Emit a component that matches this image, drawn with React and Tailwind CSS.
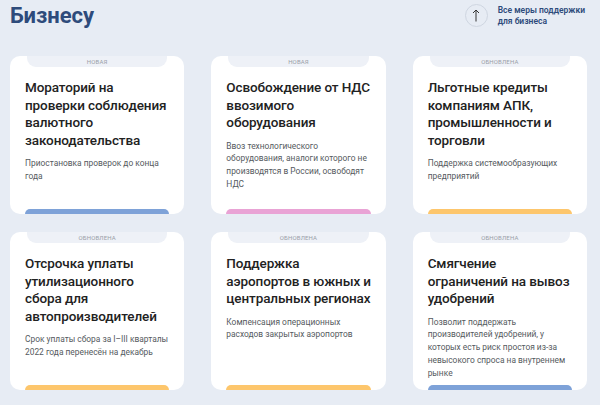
const cards = [
  {
    tag: "Новая",
    title: "Мораторий на проверки соблюдения валютного законодательства",
    text: "Приостановка проверок до конца года",
    bar: "bg-[#7ea2d8]",
  },
  {
    tag: "Новая",
    title: "Освобождение от НДС ввозимого оборудования",
    text: "Ввоз технологического оборудования, аналоги которого не производятся в России, освободят НДС",
    bar: "bg-[#e9a3d5]",
  },
  {
    tag: "Обновлена",
    title: "Льготные кредиты компаниям АПК, промышленности и торговли",
    text: "Поддержка  системообразующих предприятий",
    bar: "bg-[#fdc66c]",
  },
  {
    tag: "Обновлена",
    title: "Отсрочка уплаты утилизационного сбора для автопроизводителей",
    text: "Срок уплаты сбора за I–III кварталы 2022 года перенесён на декабрь",
    bar: "bg-[#fdc66c]",
  },
  {
    tag: "Обновлена",
    title: "Поддержка аэропортов в южных и центральных регионах",
    text: "Компенсация операционных расходов закрытых аэропортов",
    bar: "bg-[#fdc66c]",
  },
  {
    tag: "Обновлена",
    title: "Смягчение ограничений на вывоз удобрений",
    text: "Позволит поддержать производителей удобрений, у которых есть риск простоя из-за невысокого спроса на внутреннем рынке",
    bar: "bg-[#7ea2d8]",
  },
];

const Card = ({ tag, title, text, bar }) => {
  return (
    <div className="bg-white rounded-[10px] h-[158px] flex flex-col">
      <div className="mx-[17px] h-[11px] bg-[#eef1f7] rounded-b-[9px] flex items-center justify-center">
        <span className="text-[6px] uppercase text-[#9aa0a8] tracking-wide leading-none">{tag}</span>
      </div>
      <div className="pl-[15px] pr-[12px] pt-[12px]">
        <h3 className="text-[13.5px] leading-[17.5px] font-medium tracking-[-0.1px] text-[#222]">{title}</h3>
        <p className="mt-[8px] text-[8.4px] leading-[12.8px] text-[#555a60]">{text}</p>
      </div>
      <div className={`mt-auto mx-[15px] h-[5px] rounded-t-[6px] ${bar}`}></div>
    </div>
  );
};

const App = () => {
  return (
    <div className="w-[600px] h-[405px] overflow-hidden bg-[#e7ecf4]" style={{ fontFamily: "Roboto, 'Noto Sans', sans-serif" }}>
      <div className="flex justify-between items-start pl-[10px] pr-[13px] pt-[2px] h-[56px]">
        <h1 className="text-[22px] leading-[28px] font-bold text-[#2e4b7b]">Бизнесу</h1>
        <div className="flex items-start gap-[10px] pt-[1px] pr-[2px]">
          <div className="w-[23px] h-[23px] rounded-full border border-[#cfd6e1] flex items-center justify-center mt-[1px]">
            <svg width="8" height="13" viewBox="0 0 8 13" fill="none" stroke="#333" strokeWidth="1">
              <path d="M4 12.5V1M1 4l3-3 3 3" />
            </svg>
          </div>
          <div className="text-[8.5px] leading-[11px] font-semibold text-[#2e4b7b] pt-[2px]">
            Все меры поддержки
            <br />
            для бизнеса
          </div>
        </div>
      </div>
      <div className="grid grid-cols-3 gap-x-[27px] gap-y-[18px] pl-[10px] pr-[13px]">
        {cards.map((c, i) => (
          <Card key={i} {...c} />
        ))}
      </div>
    </div>
  );
};

export default App;
